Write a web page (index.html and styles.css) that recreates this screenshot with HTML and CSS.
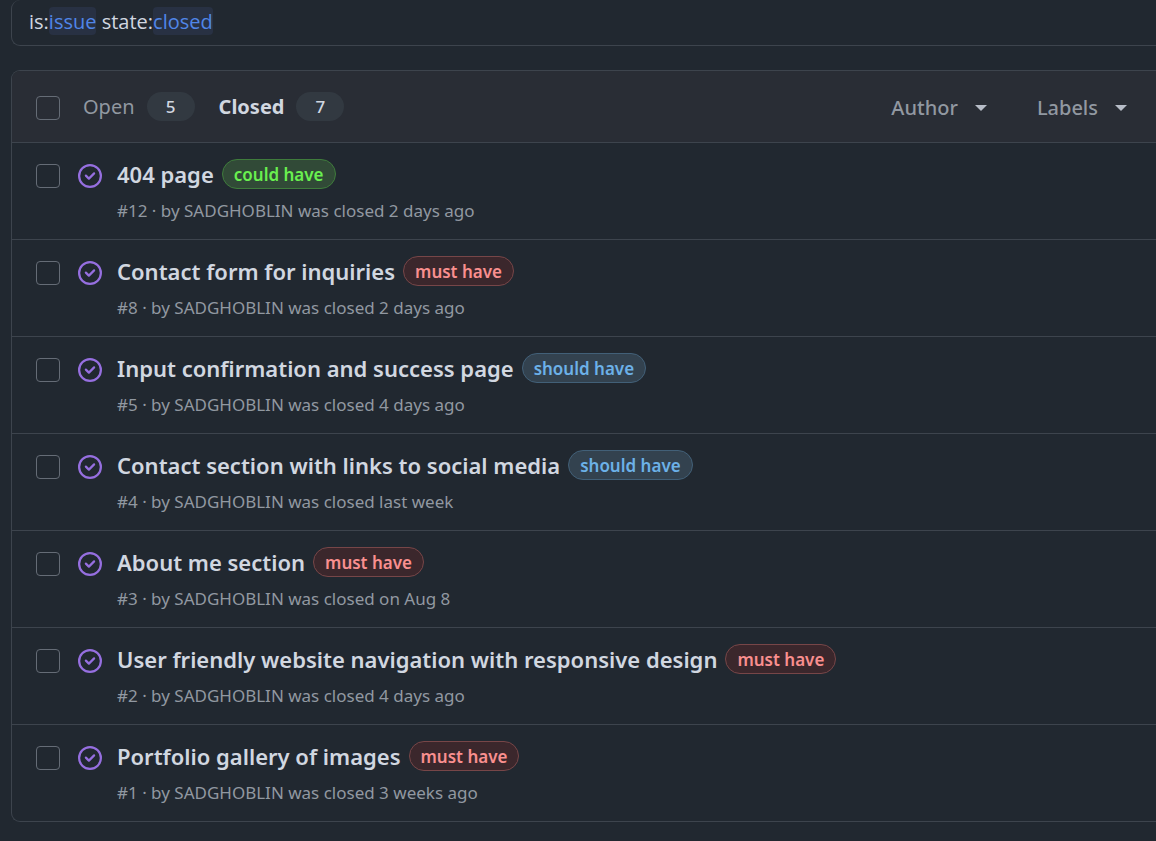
FILE: index.html
```html
<!DOCTYPE html>
<html lang="en">
<head>
<meta charset="utf-8">
<meta name="viewport" content="width=device-width, initial-scale=1">
<title>Issues</title>
<link rel="stylesheet" href="styles.css">
</head>
<body>
<svg class="sprite" aria-hidden="true">
  <symbol id="closed" viewBox="0 0 16 16">
    <path d="M11.28 6.78a.75.75 0 0 0-1.06-1.06L7.25 8.69 5.78 7.22a.75.75 0 0 0-1.06 1.06l2 2a.75.75 0 0 0 1.06 0l3.5-3.5Z"/>
    <path d="M16 8A8 8 0 1 1 0 8a8 8 0 0 1 16 0Zm-1.5 0a6.5 6.5 0 1 0-13 0 6.5 6.5 0 0 0 13 0Z"/>
  </symbol>
</svg>
<main class="page">
  <form class="search" role="search">
    <div class="query" aria-hidden="true">is:<span class="token">issue</span> state:<span class="token">closed</span></div>
    <input class="search-input" type="text" aria-label="Search issues">
  </form>

  <section class="issues" aria-label="Issues">
    <header class="toolbar">
      <input class="check" type="checkbox" aria-label="Select all issues">
      <nav class="tabs" aria-label="Issue state">
        <a class="tab" href="#open">Open <span class="count">5</span></a>
        <a class="tab tab-current" href="#closed-list" aria-current="page">Closed <span class="count">7</span></a>
      </nav>
      <div class="filters">
        <button class="filter" type="button">Author <span class="caret"></span></button>
        <button class="filter" type="button">Labels <span class="caret"></span></button>
      </div>
    </header>

    <ul class="list" id="closed-list">
      <li class="issue">
        <input class="check" type="checkbox" aria-labelledby="issue-12">
        <svg class="state"><use href="#closed"/></svg>
        <div class="body">
          <div class="heading"><a class="title" id="issue-12" href="#12">404 page</a><a class="label could" href="#could">could have</a></div>
          <p class="meta">#12 · by SADGHOBLIN was closed 2 days ago</p>
        </div>
      </li>
      <li class="issue">
        <input class="check" type="checkbox" aria-labelledby="issue-8">
        <svg class="state"><use href="#closed"/></svg>
        <div class="body">
          <div class="heading"><a class="title" id="issue-8" href="#8">Contact form for inquiries</a><a class="label must" href="#must">must have</a></div>
          <p class="meta">#8 · by SADGHOBLIN was closed 2 days ago</p>
        </div>
      </li>
      <li class="issue">
        <input class="check" type="checkbox" aria-labelledby="issue-5">
        <svg class="state"><use href="#closed"/></svg>
        <div class="body">
          <div class="heading"><a class="title" id="issue-5" href="#5">Input confirmation and success page</a><a class="label should" href="#should">should have</a></div>
          <p class="meta">#5 · by SADGHOBLIN was closed 4 days ago</p>
        </div>
      </li>
      <li class="issue">
        <input class="check" type="checkbox" aria-labelledby="issue-4">
        <svg class="state"><use href="#closed"/></svg>
        <div class="body">
          <div class="heading"><a class="title" id="issue-4" href="#4">Contact section with links to social media</a><a class="label should" href="#should">should have</a></div>
          <p class="meta">#4 · by SADGHOBLIN was closed last week</p>
        </div>
      </li>
      <li class="issue">
        <input class="check" type="checkbox" aria-labelledby="issue-3">
        <svg class="state"><use href="#closed"/></svg>
        <div class="body">
          <div class="heading"><a class="title" id="issue-3" href="#3">About me section</a><a class="label must" href="#must">must have</a></div>
          <p class="meta">#3 · by SADGHOBLIN was closed on Aug 8</p>
        </div>
      </li>
      <li class="issue">
        <input class="check" type="checkbox" aria-labelledby="issue-2">
        <svg class="state"><use href="#closed"/></svg>
        <div class="body">
          <div class="heading"><a class="title" id="issue-2" href="#2">User friendly website navigation with responsive design</a><a class="label must" href="#must">must have</a></div>
          <p class="meta">#2 · by SADGHOBLIN was closed 4 days ago</p>
        </div>
      </li>
      <li class="issue">
        <input class="check" type="checkbox" aria-labelledby="issue-1">
        <svg class="state"><use href="#closed"/></svg>
        <div class="body">
          <div class="heading"><a class="title" id="issue-1" href="#1">Portfolio gallery of images</a><a class="label must" href="#must">must have</a></div>
          <p class="meta">#1 · by SADGHOBLIN was closed 3 weeks ago</p>
        </div>
      </li>
    </ul>
  </section>
</main>
</body>
</html>
```
FILE: styles.css
```css
* { box-sizing: border-box; }

body {
  margin: 0;
  background: #212830;
  color: #d1d7e0;
  font-family: "Segoe UI", "Noto Sans", "Open Sans", sans-serif;
}

a { color: inherit; text-decoration: none; }

.sprite { display: none; }

.page {
  display: flex;
  flex-direction: column;
  gap: 24px;
  padding-left: 11px;
}

.search {
  position: relative;
  border: 1px solid #3d444d;
  border-width: 0 0 1px 1px;
  border-radius: 9px 0 0 9px;
  padding: 7px 17px 9px;
}

.query {
  font-family: "Segoe UI", "Open Sans", "Noto Sans", sans-serif;
  font-size: 20px;
  line-height: 28px;
  white-space: pre;
}

.token {
  display: inline-block;
  padding-top: 2px;
  border-radius: 4px;
  background: #283143;
  color: #5086e8;
  line-height: 26px;
}

.search-input {
  position: absolute;
  inset: 0;
  width: 100%;
  border: 0;
  background: transparent;
  color: transparent;
  caret-color: #d1d7e0;
}

.issues {
  border: 1px solid #3d444d;
  border-right: 0;
  border-radius: 9px 0 0 9px;
  overflow: hidden;
}

.toolbar {
  display: flex;
  align-items: center;
  min-height: 71px;
  padding: 0 29px 0 24px;
  background: #292d35;
}

.check {
  appearance: none;
  flex: none;
  width: 24px;
  height: 24px;
  margin: 0;
  border: 1px solid #656c76;
  border-radius: 4px;
}

.check:checked { background: #478be6; }

.toolbar .check { margin-top: 3px; }

.tabs {
  display: flex;
  gap: 24px;
  margin-left: 23px;
}

.tab {
  display: flex;
  align-items: center;
  gap: 12px;
  color: #9198a1;
  font-size: 20px;
  line-height: 30px;
}

.tab-current { color: #d1d7e0; font-weight: 700; }

.count {
  min-width: 48px;
  border-radius: 15px;
  background: #323941;
  color: #d1d7e0;
  font-size: 17px;
  font-weight: 500;
  line-height: 29px;
  text-align: center;
}

.filters {
  display: flex;
  gap: 50px;
  margin-left: auto;
}

.filter {
  display: flex;
  align-items: center;
  gap: 17px;
  padding: 3px 0 0;
  border: 0;
  background: none;
  color: #9198a1;
  font: 500 20px/30px "Segoe UI", "Noto Sans", "Open Sans", sans-serif;
}

.caret {
  border: 6px solid transparent;
  border-top-color: #b7bdc8;
  border-bottom: 0;
}

.list {
  margin: 0;
  padding: 0;
  list-style: none;
}

.issue {
  display: flex;
  border-top: 1px solid #3d444d;
  padding: 16px 24px 14px;
}

.issue .check { margin-top: 5px; }

.state {
  flex: none;
  width: 24px;
  height: 24px;
  margin: 5px 15px 0 18px;
  fill: #966fe0;
}

.heading {
  display: flex;
  align-items: center;
  gap: 8px;
  line-height: 30px;
}

.title { font-size: 22px; font-weight: 600; }

.label {
  flex: none;
  border: 1px solid;
  border-radius: 15px;
  padding: 2px 11px 0;
  font-size: 17px;
  font-weight: 600;
  line-height: 26px;
}

.could { border-color: #3f7c3c; background: #314a37; color: #69f04f; }
.must { border-color: #774648; background: #3b272c; color: #f98f8f; }
.should { border-color: #426078; background: #33424f; color: #6cb1e8; }

.meta {
  margin: 8px 0 0;
  color: #9198a1;
  font-size: 17px;
  line-height: 28px;
}
```
